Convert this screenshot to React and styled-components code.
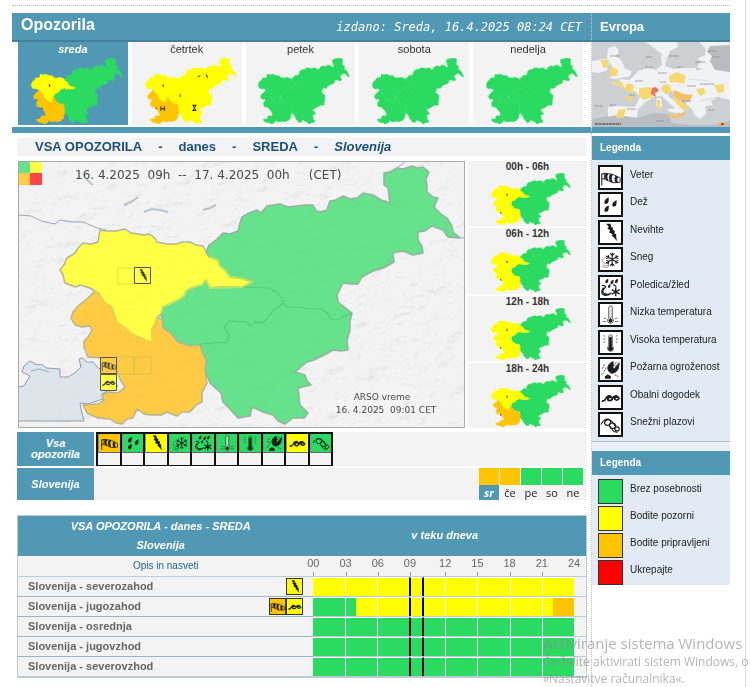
import React, { useState } from 'react';
import styled, { createGlobalStyle, css } from "styled-components";

const BLUE = '#5198b5';
const LEVEL = {
    green: '#2bdb61',
    yellow: '#ffff00',
    orange: '#ffc400',
    red: '#ff0000',
};
const SOFT = {
    green: '#66e28c',
    yellow: '#ffff45',
    orange: '#ffcb45',
};

const GlobalStyle = createGlobalStyle`
  * { box-sizing: border-box; }
  body {
    margin: 0;
    background: #fff;
    color: #333;
    font-family: "Liberation Sans", Arial, sans-serif;
    font-size: 11px;
    overflow-x: hidden;
  }
  button {
    font: inherit;
    color: inherit;
    padding: 0;
    border: 0;
    background: none;
    cursor: pointer;
  }
  a { text-decoration: none; }
  svg { display: block; }
`;

const Page = styled.div`
  display: flex;
  flex-direction: column;
  min-height: 100vh;
  margin-right: 4px;
  padding: 5px 15px 0 12px;
  border-right: 1px solid #dcdcdc;
`;

const TopRule = styled.div`
  height: 8px;
  border-top: 1px dotted #b4b4b4;
`;

const Columns = styled.div`
  display: grid;
  grid-template-columns: minmax(0, 1fr) 139px;
  flex: ${props => props.$grow ? 1 : 'none'};
`;

const Bar = styled.header`
  display: flex;
  justify-content: space-between;
  align-items: center;
  height: 29px;
  padding: 0 9px;
  background: ${BLUE};
  border-bottom: 2px solid #45809b;
  color: #fff;
`;

const SideBar = styled(Bar)`
  border-left: 1px dotted #ccc;
  padding: 0 8px;
`;

const Title = styled.h1`
  margin: 0 0 4px;
  font-size: 16px;
  line-height: 20px;
`;

const Issued = styled.span`
  font: italic 12px "DejaVu Sans Mono", monospace;
`;

const SideTitle = styled.h2`
  margin: 0;
  font-size: 13px;
`;

const Days = styled.nav`
  display: grid;
  grid-template-columns: repeat(5, 1fr);
  gap: 4px;
  padding: 0 8px 2px 6px;
  height: 91px;
  border-bottom: 6px solid ${BLUE};
`;

const Day = styled.button`
  display: flex;
  flex-direction: column;
  align-items: center;
  background: #f3f3f3;
  line-height: 14px;
  gap: 2px;
  svg { margin-left: 8px; }
  ${props => props.$active && css`
    background: ${BLUE};
    color: #fff;
    font-weight: bold;
    font-style: italic;
  `}
`;

const Europe = styled.a`
  display: block;
  height: 91px;
  border-left: 1px dotted #bbb;
  border-bottom: 6px solid ${BLUE};
`;

const Main = styled.main`
  padding: 5px 4px 0 5px;
`;

const SubTitle = styled.h2`
  display: flex;
  gap: 16px;
  margin: 0 0 5px;
  padding: 0 18px;
  background: #f3f3f3;
  color: #1c4f7c;
  font-size: 13px;
  line-height: 18px;
`;

const MapArea = styled.div`
  display: grid;
  grid-template-columns: minmax(0, 1fr) 119px;
  gap: 3px;
  padding-left: 1px;
  margin-bottom: 4px;
`;

const Intervals = styled.div`
  display: grid;
  grid-auto-rows: 1fr;
  gap: 2px;
`;

const Interval = styled.div`
  display: flex;
  flex-direction: column;
  align-items: center;
  background: #f3f3f3;
  font-size: 10px;
  font-weight: bold;
  line-height: 12px;
  svg { margin-left: 6px; }
`;

const FilterRow = styled.div`
  display: flex;
  align-items: flex-start;
  gap: 2px;
  min-height: ${props => props.$tall ? 34 : 32}px;
  margin-bottom: 2px;
  background: #f3f3f3;
`;

const FilterLabel = styled.div`
  display: flex;
  align-items: center;
  justify-content: center;
  align-self: stretch;
  width: 77px;
  padding: 0 10px;
  background: ${BLUE};
  color: #fff;
  text-align: center;
  font-weight: bold;
  font-style: italic;
  line-height: 11px;
`;

const Kinds = styled.div`
  display: grid;
  grid-template-columns: repeat(10, 1fr);
  width: 237px;
  height: 34px;
  border: solid #111;
  border-width: 2px 1px 1px;
`;

const Kind = styled.button`
  display: flex;
  align-items: flex-start;
  border: solid #111;
  border-width: 0 1px;
  background: linear-gradient(#8d8d8d, #8d8d8d) 0 0 / 2px 19px no-repeat #f3f3f3;
  span {
    flex: 1;
    margin-left: 1px;
    border-bottom: 1px solid #666;
    background: ${props => LEVEL[props.$level]};
  }
`;

const WeekStrip = styled.div`
  display: grid;
  grid-template-columns: repeat(5, 20px);
  gap: 1px;
  margin-left: auto;
  padding-right: 4px;
`;

const WeekDay = styled.button`
  border-top: 17px solid ${props => LEVEL[props.$level]};
  font: 11px/15px "Open Sans", sans-serif;
  color: #222;
  ${props => props.$active && css`
    background: ${BLUE};
    color: #fff;
    font-weight: bold;
    font-style: italic;
  `}
`;

const Table = styled.table`
  width: 100%;
  margin-top: 15px;
  border-collapse: collapse;
  table-layout: fixed;
  border: solid #b9cbd8;
  border-width: 1px 1px 2px;
  background: #f3f3f3;
  th, td { padding: 0; }
  thead th {
    height: 40px;
    padding-right: 10px;
    background: ${BLUE};
    color: #fff;
    font-style: italic;
    line-height: 19px;
  }
  tbody th {
    height: 20px;
    border-bottom: 1px solid #9db3c4;
    color: #666;
    text-align: left;
  }
  tbody td { border-bottom: 1px solid #bccbd6; }
`;

const AdviceCell = styled.td`
  height: 20px;
  text-align: center;
  font-size: 10px;
  a { color: #23648f; }
`;

const RegionName = styled.div`
  display: flex;
  align-items: center;
  height: 19px;
  padding: 0 10px;
  span { flex: 1; }
`;

const SmallIcon = styled.i`
  display: block;
  width: 17px;
  height: 17px;
  border: 1px solid #333;
  background: ${props => LEVEL[props.$level]};
`;

const TimeLine = styled.div`
  display: flex;
  height: ${props => props.$axis ? 20 : 19}px;
  padding-right: 12px;
`;

const Hour = styled.div`
  flex: 1;
  background: ${props => LEVEL[props.$level]};
  border-top: 1px solid #fff;
  border-right: ${props => props.$mark ? '1px solid #fff' : 0};
  ${props => props.$now && css`
    flex: 0 0 15px;
    border-left: 2px solid #000;
    border-right: 2px solid #000;
  `}
`;

const Tick = styled.div`
  flex: ${props => props.$last ? 'none' : props.$wide ? '35 0 0' : '32 0 0'};
  width: 0;
  background: linear-gradient(#999, #999) 0 100% / 1px 4px no-repeat;
  span {
    display: block;
    width: 20px;
    margin-left: -10px;
    text-align: center;
    line-height: 15px;
    color: #666;
  }
`;

const Side = styled.aside`
  border-left: 1px dotted #bbb;
  padding-top: 3px;
`;

const LegendTitle = styled.h3`
  margin: 0;
  padding: 0 8px;
  background: ${BLUE};
  color: #fff;
  font-size: 10px;
  line-height: 24px;
`;

const Legend = styled.ul`
  display: flex;
  flex-direction: column;
  justify-content: space-between;
  margin: 0;
  padding: ${props => props.$short ? '4px 6px 0' : '5px 6px 4px'};
  height: ${props => props.$short ? 110 : 282}px;
  list-style: none;
  background: #e2ebf4;
  border-bottom: ${props => props.$short ? 0 : '1px solid #b5bcc4'};
`;

const LegendGap = styled.div`
  height: 9px;
  background: #e9f0f7;
`;

const LegendItem = styled.li`
  display: flex;
  gap: 7px;
  height: 25px;
  font-size: 10px;
  line-height: 20px;
  color: #222;
`;

const LegendBox = styled.i`
  display: block;
  width: 25px;
  height: 25px;
  border: ${props => props.$level ? '1px solid #333' : '2px solid #111'};
  background: ${props => props.$level ? LEVEL[props.$level] : '#fff'};
`;

const Watermark = styled.div`
  position: fixed;
  right: 0;
  bottom: 0;
  width: 207px;
  pointer-events: none;
  white-space: nowrap;
  font: 12px/17px "Open Sans", sans-serif;
  color: rgba(140, 140, 140, 0.65);
  b {
    display: block;
    font-size: 15px;
    line-height: 20px;
    font-weight: normal;
  }
`;

// regije, v koordinatah velike karte 447 x 267
const NW = 'M77 130L72 127 62 124 58 126 47 122 45 114 42 109 46 104 49 97 57 92 60 87 65 82 73 83 80 81 82 69 89 70 98 70 107 68 113 72 120 73 126 74 131 73 137 77 139 81 149 83 159 83 164 81 172 81 178 84 185 85 188 91 191 96 200 99 202 105 207 109 212 116 222 117 228 118 234 121 225 126 212 126 200 126 192 127 188 119 184 124 179 125 169 129 166 135 160 139 152 143 145 146 143 153 139 157 137 164 134 169 134 182 125 178 115 174 107 167 99 161 96 154 94 146 87 142 80 132Z';
const SW = 'M77 130L70 137 60 145 55 151 53 157 57 164 64 166 72 165 74 169 70 176 66 180 66 186 70 196 84 197 90 204 99 211 103 220 107 226 100 232 91 231 84 234 86 239 80 243 65 244 69 252 80 257 92 258 98 262 104 263 109 258 115 257 119 248 126 253 132 254 143 254 149 251 159 255 164 251 172 251 178 244 184 241 184 232 189 222 187 209 188 199 184 191 182 184 172 185 160 181 152 172 145 167 144 158 139 157 137 164 134 169 134 182 125 178 115 174 107 167 99 161 96 154 94 146 87 142 80 132Z';
const EAST = 'M188 91L191 84 198 79 205 72 212 73 220 70 222 62 224 56 231 52 239 49 243 52 249 45 262 43 270 46 279 45 287 44 295 44 298 50 302 51 309 49 312 40 318 39 325 35 332 38 339 37 345 32 355 34 363 39 370 41 372 43 370 27 366 24 366 12 372 11 379 7 385 8 394 5 399 7 405 6 411 11 408 18 409 24 409 31 415 36 420 37 416 46 423 53 429 57 434 65 435 71 442 77 430 76 425 69 414 65 407 70 400 71 400 79 404 85 405 92 395 94 385 90 375 92 376 101 365 107 355 110 344 116 340 123 333 123 325 122 319 134 320 141 334 152 332 160 332 169 329 179 330 189 323 190 315 189 302 196 296 199 289 201 283 206 277 211 287 214 289 220 293 224 280 227 281 235 282 244 290 252 286 257 275 257 267 263 260 260 255 254 245 251 234 246 232 255 220 257 212 248 205 241 203 232 192 222 187 209 188 199 184 191 182 184 172 185 160 181 152 172 145 167 144 158 143 153 145 146 152 143 160 139 166 135 169 129 179 125 184 124 188 119 192 127 212 126 225 126 234 121 222 117 212 116 207 109 202 105 200 99 191 96Z';
const BORDERS = 'M225 126L249 127 259 131 264 138 265 142 254 151 250 156 245 162 238 161 232 165 229 161 212 160 206 166 211 173 209 181 205 182 199 181 193 183 187 182 182 184M265 142L269 146 280 146 292 148 303 148 309 152 313 158 319 159 325 156 334 152';

const Slovenia = ({ nw = 'green', sw = 'green', ne = 'green', width, height, marks, ...rest }) => (
    <svg width={width} height={height} viewBox="42 5 400 258" preserveAspectRatio="none" aria-hidden="true" {...rest}>
        <g strokeWidth="2">
            <path d={EAST} fill={LEVEL[ne]} stroke={LEVEL[ne]} />
            <path d={NW} fill={LEVEL[nw]} stroke={LEVEL[nw]} />
            <path d={SW} fill={LEVEL[sw]} stroke={LEVEL[sw]} />
        </g>
        {marks === 'few' && <path d="M121 108l3 10M88 200l5 5" stroke="#333" strokeWidth="5" />}
        {marks === 'many' &&
            <path d="M121 108v10M88 201h5M111 194v18M126 194v18M110 203h20M195 147v10M248 190h18M248 210h18M252 192l10 16M262 192l-10 16M272 76h10M307 70l8 12" stroke="#222" strokeWidth="4" fill="none" />}
    </svg>
);

const Flake = () => (
    <path d="M14 4v16M7 8l14 8M21 8L7 16M11.500 5l2.500 2.500L16.500 5M11.500 19l2.500-2.500 2.500 2.500M7 11l3-1-.5-3M21 13l-3 1 .5 3M21 11l-3-1 .5-3M7 13l3 1-.5 3" strokeWidth="1.200" />
);

const Drop = ({ x, y, s = 1 }) => (
    <path transform={`translate(${x} ${y}) scale(${s})`} d="M5 0C2 1 0 3 0 5.500 0 8 3.500 8 4.500 5.500 5 4 5 2 5 0Z" fill="currentColor" stroke="none" />
);

const DRAWINGS = {
    wind: <g>
        <path d="M2 7v14M2 8.500l3-1.500M2 14l3-1" strokeWidth="1.200" />
        <path d="M5 7l10 1.500 8 4v5l-8 .5-10-4z" strokeWidth="1" />
        <path d="M7 7.500c-2 2-1 4.500 0 6.500l2 1c-1.500-2.500-1.500-5 0-7zM12 8.500c-2 2-1 6 0 8l2 .5c-1.500-3-1.500-5.500 0-8zM18 10.500c-1.500 2-1 5 0 7h2c-1-2-1-4 0-6z" fill="currentColor" />
    </g>,
    rain: <g><Drop x={5} y={4} /><Drop x={14} y={7} /><Drop x={5} y={13} /></g>,
    storm: <path d="M7 2h5l1 4 2 .5-.5 2.500 2.500 1-.5 3 2 1v3l1 5-4-5-2-1 1-2-4-2 1-2.500-3-2 1.500-2z" fill="currentColor" stroke="none" />,
    snow: <g><Flake /><path d="M8 9c-4 1-7 4-4 7 2 1 3-1 5 1 2 3-4 2-6 1M7 16c3 0 4 4 1 5-2 0-4 0-6-1" strokeWidth=".8" opacity=".6" /></g>,
    ice: <g>
        <Drop x={6} y={2} s={0.700} /><Drop x={12} y={3} s={0.700} /><Drop x={17} y={2} s={0.700} /><Drop x={9} y={8} s={0.600} />
        <path d="M2 10c3-1 5 0 4 2-3 3-4 5-1 7 3 1 6 1 8-1M4 12c-3 4-3 8 2 9 3 0 5-1 6-2M15 9c2 0 4 2 3 3" strokeWidth="1.300" />
        <path d="M18 12v10M13.500 14.500l9 5M22.500 14.500l-9 5" strokeWidth="1.600" />
    </g>,
    cold: <g>
        <path d="M10 4c0-2.500 4-2.500 4 0v12c2.500 2 1.500 6-2 6s-4.500-4-2-6z" fill="#e8e8e8" fillOpacity=".7" strokeWidth=".8" />
        <circle cx="12" cy="19" r="1.800" fill="currentColor" />
        <path d="M4 16l3 1M3 20h4M20 16l-3 1M21 20h-4M12 15v3" strokeWidth=".7" />
    </g>,
    hot: <g>
        <path d="M10 5c0-2.500 4-2.500 4 0v11c2.500 2 1.500 6-2 6s-4.500-4-2-6z" strokeWidth=".8" />
        <path d="M11 6h2v10l1.500 3c0 3-5 3-5 0L11 16z" fill="currentColor" />
        <path d="M4 4l2 1M3.500 8H6M4 12l2-1M20 4l-2 1M20.500 8H18M20 12l-2-1" strokeWidth=".7" />
    </g>,
    fire: <g>
        <path d="M15 3c-6 2-8 8-4 12 3 3 9 0 10-5 0-2 1-3 1-5l-4 4c-1 3-4 2-3-1z" fill="currentColor" />
        <path d="M16 8l3-5M18 9l4-6M3 11l2-5M5 14l2-4M2 18l3-3M17 18l4 2" strokeWidth="1" strokeDasharray="2 1" />
        <path d="M6 22v-2l3-2 3 2v2z" fill="currentColor" />
    </g>,
    coast: <path d="M2 16c3 1 4-1 5-3 1-3 5-4 6-1-2-1-4 0-4 2s4 2 5 0c1-4 5-5 7-2-3-1-5 0-4 2 1 1 3 2 5-1" strokeWidth="2" />,
    snowslide: <g>
        <path d="M1 12c3-5 6-7 9-6 4 2 6 4 7 8M5 10c2-5 8-4 7 0s-6 4-7 0zM11 14c-1-4 6-5 7-1s-6 5-7 1zM17 17c0-3 5-3 5 0s-5 3-5 0z" strokeWidth="1.300" />
        <path d="M11 14l5 6 4 1" strokeWidth="1.200" />
    </g>,
};

const Icon = ({ name, ...rest }) => (
    <svg viewBox="0 0 24 24" width="100%" fill="none" stroke="currentColor" color="#1c1c1c" aria-hidden="true" {...rest}>
        {DRAWINGS[name]}
    </svg>
);

const EuropeMap = () => (
    <svg viewBox="0 0 138 85" width="100%" height="85" preserveAspectRatio="none" role="img" aria-label="Evropa">
        <path fill="#cdd0d3" d="M0 0h138v85H0z" />
        <g fill="#f1f2f4">
            <path d="M16 6l7-2 4 5-3 5 6 5 3 8 7 2-2 5-14 3-7-1 5-4-4-2 2-6-5-8zM0 19l14-2 3 4-2 7-8 3-7-1z" />
            <path d="M19 41l8-1 1-3 10 1 8-9 10-3 8 2 6-5-1-9 5-5 1 9-2 6 9 3 10-1 13 0 4-7-4-2 8-4 1-6-6-6V0h30v58l-12-3-7 4 2 4-8 1 1 8-6 5-5-3-3-7-5-4-2-5-9-4-4-5-6 0 3 6 10 7 6 6-4 5-5-6-9-8-6-5-8 1-6 4-9 8-1 8-9 7-10 3-10-2 0-18 8-1 19 1 5-10-4-5z" />
            <path d="M54 0l8 6 8 6 6 3 2-6 8-4-1-5zM65 56l4 0 1 9-4 2-2-4zM75 67l12-1-1 5-8-1z" />
        </g>
        <path fill="#b9bcc0" d="M0 85v-8l26-4 20 3 16-5 16 1 1 9 18 2 24 0 17-4v6zM118 4l20-1v27l-15-2-5-9 2-5-5-4z" />
        <path d="M72 15l4 10M92 22l6 7M0 63h18M97 37l20 2M108 59l20-4" stroke="#c9cbce" strokeWidth=".6" />
        <g fill="#f5d86f">
            <path d="M19 24l7 4-1 6-7 0zM9 18l7 0 0 7-5 1zM33 44c2-4 8-3 9 1l-2 6-6-1zM47 46l12-1 2 10-9 3-5-4zM77 34l8-4 9 4-2 8-8-2-6 1zM71 43l6-1 3 8-7 2-4-5zM104 47l8-1 2 5-6 3zM122 43l10-1v8l-6 1zM65 58l3 0 0 10-3-1zM26 68l8-1-3 9-7 0zM80 54l9 5 8 7-5 3-8-8zM18 39l12 1 3 7zM32 55l9-1-3 6z" />
        </g>
        <path fill="#f5c065" d="M82 48l10 4 9 1-4 7-9-2-7-5zM76 72l8 1 8-3 2 2-9 4-8-1z" />
        <path fill="#ee6d62" d="M60 46l4-1 3 4-4 2 1 4-5-3z" />
        <path d="M18 14h9M54 15h6M66 31h9M53 25h8M43 39h8M77 14h10M103 20h10M116 9h9M108 42h14M95 44h9M37 53h6M3 64h8M18 63h6M90 59h9M116 68h6M64 79h8M104 27h5M120 15h8M85 25h6M68 40h6M35 67h9" stroke="#85898d" strokeWidth=".8" strokeDasharray="3 .5 4 .3" />
        <path d="M3 82h26" stroke="#777" strokeWidth="2" strokeDasharray="3 .5" />
        <path fill="#f5c400" d="M126 81h3v2h-3z" />
        <path fill="#d33" d="M129 81h3v2h-3z" />
    </svg>
);

const MainMap = () => (
    <svg viewBox="0 0 447 267" width="100%" role="img" aria-label="Slovenija - vsa opozorila">
        <defs>
            <filter id="relief" x="0" y="0" width="100%" height="100%">
                <feTurbulence type="fractalNoise" baseFrequency="0.045 0.070" numOctaves="4" seed="8" />
                <feDiffuseLighting lightingColor="#fff" surfaceScale="4" diffuseConstant="1.250">
                    <feDistantLight azimuth="225" elevation="55" />
                </feDiffuseLighting>
            </filter>
        </defs>
        <path fill="#f3f3f4" d="M0 0h447v267H0z" />
        <path filter="url(#relief)" opacity=".14" d="M0 0h447v267H0z" style={{ mixBlendMode: 'multiply' }} />
        <path fill="#dde4ea" stroke="#8e9eb0" d="M0 226l6-1 6-10-8-4 2-6 6-5 5 3 8 1 3 3 14 1 0 8 8 0 8-5 5-5-2-8 3-1 5 4 6 0 4 5 6 4 15 15-7 3-9 5 1 5-15 5-8-1 1 6 3 12H0z" />
        <path fill="none" stroke="#9aa6bc" d="M1 54l12 1 10 5 14 3 5-4 12 2 11 0 14 6 9 2" />
        <path fill="none" stroke="#b9c0ce" strokeWidth="2" d="M106 44l9-4 5-4M126 51l8-3 8 1 8 2M185 49l7-2 6-3M68 18l7 6" />
        <path fill="none" stroke="#9aa6bc" d="M379 7l8-6M13 210l8-2 10 3M434 76l12 1" />
        <g stroke="#b5b39a" strokeWidth="1.500" strokeLinejoin="round">
            <path d={EAST} fill={SOFT.green} stroke="#94b39f" />
            <path d={NW} fill={SOFT.yellow} />
            <path d={SW} fill={SOFT.orange} />
        </g>
        <path d="M77 130L87 142 94 146 99 161 115 174 134 182 134 169 139 157" fill="none" stroke="#ecd93d" strokeWidth="2" />
        <path d="M188 119L184 124 179 125 169 129 166 135 160 139 152 143 145 146 143 153M191 96L200 99 202 105 207 109 212 116 222 117 234 121 225 126 192 127 188 119" fill="none" stroke="#b6e85f" strokeWidth="2" />
        <path d={BORDERS} fill="none" stroke="#57cb7c" strokeWidth="1.200" />
        <path filter="url(#relief)" opacity=".05" d="M40 0h400v267H40z" style={{ mixBlendMode: 'multiply' }} />
        <path d="M100 107h16v16h-16z" fill="none" stroke="#e0e03a" />
        <path d="M99 196h17v17H99zM116 196h17v17h-17z" fill="none" stroke="#d3c54a" />
        <g stroke="#555">
            <path d="M116.500 106.500h16v16h-16z" fill={SOFT.yellow} />
            <path d="M82.500 196.500h16v16h-16z" fill={SOFT.orange} />
            <path d="M82.500 213.500h16v16h-16z" fill={SOFT.yellow} />
        </g>
        <Icon name="storm" x="117" y="107" width="15" height="15" color="#444" />
        <Icon name="wind" x="83" y="197" width="15" height="15" color="#444" />
        <Icon name="coast" x="83" y="214" width="15" height="15" color="#444" />
        <path fill={SOFT.green} d="M0 0h12v12H0z" />
        <path fill={SOFT.yellow} d="M12 0h12v12H12z" />
        <path fill={SOFT.orange} d="M0 12h12v12H0z" />
        <path fill="#ff4545" d="M12 12h12v12H12z" />
        <g fill="#484848" fontFamily="'DejaVu Sans', sans-serif">
            <text x="57" y="18" fontSize="12" style={{ whiteSpace: 'pre' }}>{'16. 4.2025  09h  --  17. 4.2025  00h     (CET)'}</text>
            <text x="364" y="239" fontSize="9" textAnchor="middle">ARSO vreme</text>
            <text x="368" y="252" fontSize="9" textAnchor="middle" style={{ whiteSpace: 'pre' }}>{'16. 4.2025  09:01 CET'}</text>
        </g>
        <path d="M.5 .5h446v266H.5z" fill="none" stroke="#a9a9a9" />
    </svg>
);

const days = [
    { name: 'sreda', short: 'sr', level: 'orange', map: { nw: 'yellow', sw: 'orange', marks: 'few' } },
    { name: 'četrtek', short: 'če', level: 'orange', map: { nw: 'yellow', sw: 'orange', ne: 'yellow', marks: 'many' } },
    { name: 'petek', short: 'pe', level: 'green', map: {} },
    { name: 'sobota', short: 'so', level: 'green', map: {} },
    { name: 'nedelja', short: 'ne', level: 'green', map: {} },
];

const intervals = [
    ['00h - 06h', 'yellow'],
    ['06h - 12h', 'yellow'],
    ['12h - 18h', 'yellow'],
    ['18h - 24h', 'orange'],
];

const kinds = [
    ['wind', 'Veter', 'orange'],
    ['rain', 'Dež', 'green'],
    ['storm', 'Nevihte', 'yellow'],
    ['snow', 'Sneg', 'green'],
    ['ice', 'Poledica/žled', 'green'],
    ['cold', 'Nizka temperatura', 'green'],
    ['hot', 'Visoka temperatura', 'green'],
    ['fire', 'Požarna ogroženost', 'green'],
    ['coast', 'Obalni dogodek', 'yellow'],
    ['snowslide', 'Snežni plazovi', 'green'],
];

const levels = [
    ['green', 'Brez posebnosti'],
    ['yellow', 'Bodite pozorni'],
    ['orange', 'Bodite pripravljeni'],
    ['red', 'Ukrepajte'],
];

const all = level => Array(24).fill(level);

const regions = [
    { name: 'severozahod', icons: [['storm', 'yellow']], hours: all('yellow') },
    {
        name: 'jugozahod',
        icons: [['wind', 'orange'], ['coast', 'yellow']],
        hours: all('yellow').map((l, i) => i < 4 ? 'green' : i > 21 ? 'orange' : l),
    },
    { name: 'osrednja', icons: [], hours: all('green') },
    { name: 'jugovzhod', icons: [], hours: all('green') },
    { name: 'severovzhod', icons: [], hours: all('green') },
];

const ticks = ['00', '03', '06', '09', '12', '15', '18', '21', '24'];
const NOW = 9;

const App = () => {
    const [day, setDay] = useState(0);

    return (
        <>
            <GlobalStyle />
            <Page>
                <TopRule />
                <Columns>
                    <Bar>
                        <Title>Opozorila</Title>
                        <Issued>izdano: Sreda, 16.4.2025 08:24 CET</Issued>
                    </Bar>
                    <SideBar><SideTitle>Evropa</SideTitle></SideBar>
                    <Days>
                        {days.map((d, i) => (
                            <Day key={d.name} $active={i === day} onClick={() => setDay(i)}>
                                {d.name}
                                <Slovenia width="92" height="66" {...d.map} />
                            </Day>
                        ))}
                    </Days>
                    <Europe href="#evropa"><EuropeMap /></Europe>
                </Columns>

                <Columns $grow>
                    <Main>
                        <SubTitle>
                            <span>VSA OPOZORILA</span><span>-</span><span>danes</span><span>-</span>
                            <span>SREDA</span><span>-</span><i>Slovenija</i>
                        </SubTitle>
                        <MapArea>
                            <MainMap />
                            <Intervals>
                                {intervals.map(([label, sw]) => (
                                    <Interval key={label}>
                                        {label}
                                        <Slovenia width="80" height="52" nw="yellow" sw={sw} marks="few" />
                                    </Interval>
                                ))}
                            </Intervals>
                        </MapArea>

                        <FilterRow $tall>
                            <FilterLabel>Vsa opozorila</FilterLabel>
                            <Kinds>
                                {kinds.map(([icon, label, level]) => (
                                    <Kind key={icon} $level={level} aria-label={label}>
                                        <span><Icon name={icon} height="18" /></span>
                                    </Kind>
                                ))}
                            </Kinds>
                        </FilterRow>
                        <FilterRow>
                            <FilterLabel>Slovenija</FilterLabel>
                            <WeekStrip>
                                {days.map((d, i) => (
                                    <WeekDay key={d.short} $level={d.level} $active={i === day} onClick={() => setDay(i)}>
                                        {d.short}
                                    </WeekDay>
                                ))}
                            </WeekStrip>
                        </FilterRow>

                        <Table>
                            <colgroup>
                                <col style={{ width: '52%' }} />
                                <col />
                            </colgroup>
                            <thead>
                                <tr>
                                    <th>VSA OPOZORILA - danes - SREDA<br />Slovenija</th>
                                    <th>v teku dneva</th>
                                </tr>
                            </thead>
                            <tbody>
                                <tr>
                                    <AdviceCell><a href="#nasveti">Opis in nasveti</a></AdviceCell>
                                    <td>
                                        <TimeLine $axis>
                                            {ticks.map((t, i) => (
                                                <Tick key={t} $wide={i === 3} $last={i === 8}><span>{t}</span></Tick>
                                            ))}
                                        </TimeLine>
                                    </td>
                                </tr>
                                {regions.map(r => (
                                    <tr key={r.name}>
                                        <th scope="row">
                                            <RegionName>
                                                <span>Slovenija - {r.name}</span>
                                                {r.icons.map(([icon, level]) => (
                                                    <SmallIcon key={icon} $level={level}><Icon name={icon} /></SmallIcon>
                                                ))}
                                            </RegionName>
                                        </th>
                                        <td>
                                            <TimeLine>
                                                {r.hours.map((level, i) => (
                                                    <Hour key={i} $level={level} $now={i === NOW} $mark={i % 3 === 2 && i !== NOW - 1 && i !== 23} />
                                                ))}
                                            </TimeLine>
                                        </td>
                                    </tr>
                                ))}
                            </tbody>
                        </Table>
                    </Main>

                    <Side>
                        <LegendTitle>Legenda</LegendTitle>
                        <Legend>
                            {kinds.map(([icon, label]) => (
                                <LegendItem key={icon}>
                                    <LegendBox><Icon name={icon} /></LegendBox>
                                    {label}
                                </LegendItem>
                            ))}
                        </Legend>
                        <LegendGap />
                        <LegendTitle>Legenda</LegendTitle>
                        <Legend $short>
                            {levels.map(([level, label]) => (
                                <LegendItem key={level}>
                                    <LegendBox $level={level} />
                                    {label}
                                </LegendItem>
                            ))}
                        </Legend>
                    </Side>
                </Columns>
            </Page>
            <Watermark>
                <b>Aktiviranje sistema Windows</b>
                Če želite aktivirati sistem Windows, o<br />
                »Nastavitve računalnika«.
            </Watermark>
        </>
    );
};

export default App;
